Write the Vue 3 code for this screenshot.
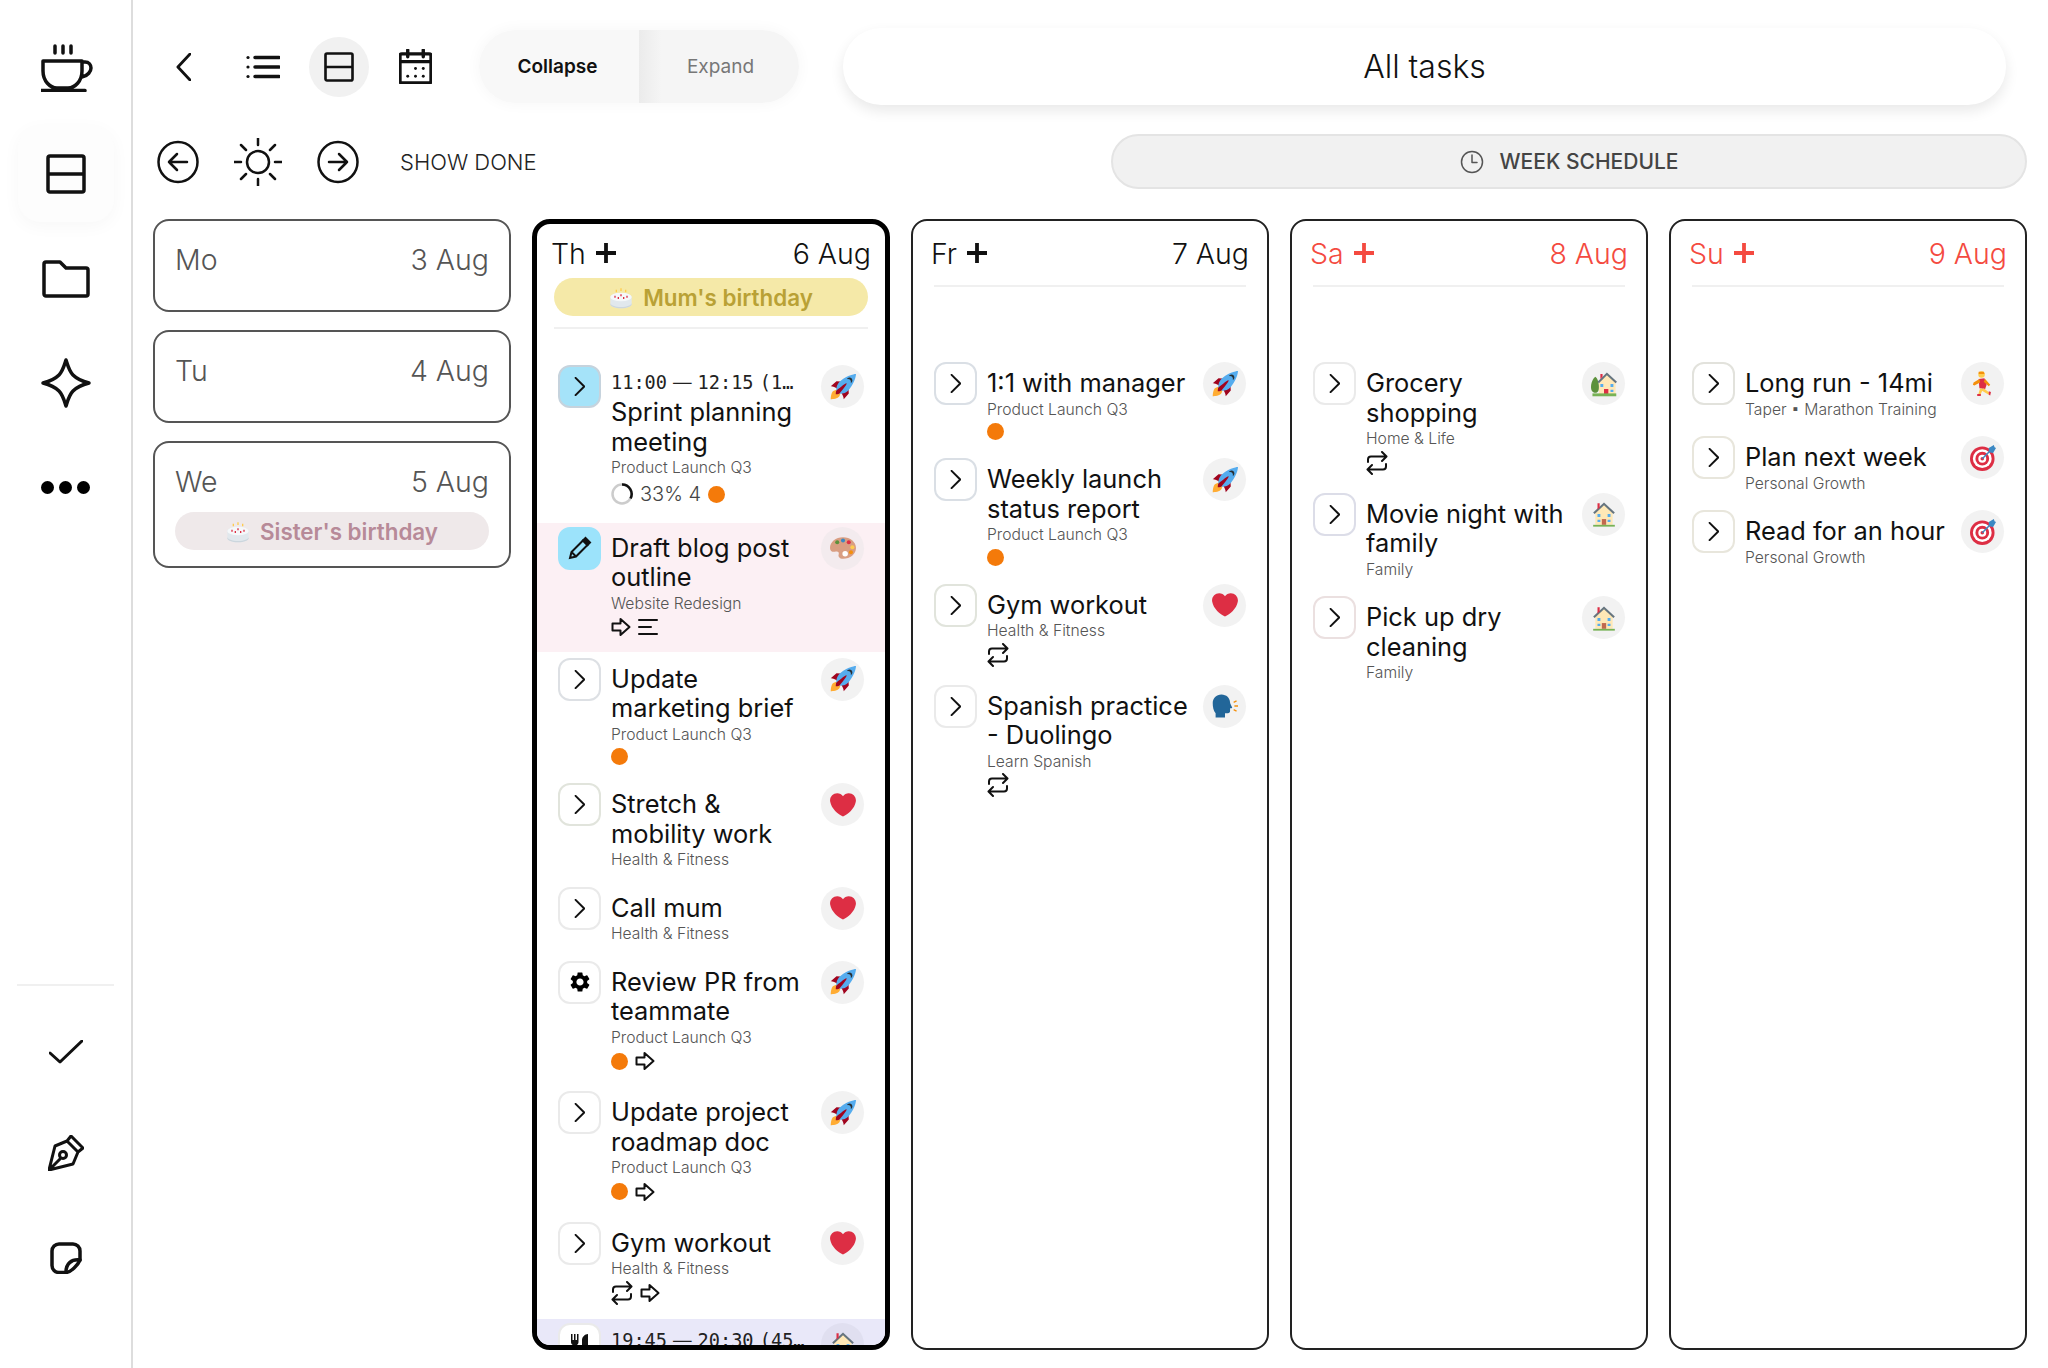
<script setup>
const chevron = { kind: 'chev' }

const days = [
  {
    short: 'Th', date: '6 Aug', active: true, event: "Mum's birthday",
    tasks: [
      { time: ['11:00', '12:15 (1…'], title: 'Sprint planning meeting', sub: 'Product Launch Q3', icon: 'rocket', btn: { kind: 'chev', bg: '#a5e3f9', edge: '#c6d3dd' }, meta: ['ring', 'dot'] },
      { title: 'Draft blog post outline', sub: 'Website Redesign', icon: 'palette', tone: 'pink', btn: { kind: 'pencil', bg: '#9ce3fb', edge: '#9ce3fb' }, meta: ['arrow', 'lines'] },
      { title: 'Update marketing brief', sub: 'Product Launch Q3', icon: 'rocket', btn: { kind: 'chev', edge: '#dde0e4' }, meta: ['dot'] },
      { title: 'Stretch & mobility work', sub: 'Health & Fitness', icon: 'heart', btn: { kind: 'chev', edge: '#e1e4dc' } },
      { title: 'Call mum', sub: 'Health & Fitness', icon: 'heart', btn: chevron },
      { title: 'Review PR from teammate', sub: 'Product Launch Q3', icon: 'rocket', btn: { kind: 'gear' }, meta: ['dot', 'arrow'] },
      { title: 'Update project roadmap doc', sub: 'Product Launch Q3', icon: 'rocket', btn: chevron, meta: ['dot', 'arrow'] },
      { title: 'Gym workout', sub: 'Health & Fitness', icon: 'heart', btn: chevron, meta: ['repeat', 'arrow'] },
      { time: ['19:45', '20:30 (45…'], icon: 'house', tone: 'lilac', btn: { kind: 'fork' } }
    ]
  },
  {
    short: 'Fr', date: '7 Aug',
    tasks: [
      { title: '1:1 with manager', sub: 'Product Launch Q3', icon: 'rocket', btn: { kind: 'chev', edge: '#dadfe5' }, meta: ['dot'] },
      { title: 'Weekly launch status report', sub: 'Product Launch Q3', icon: 'rocket', btn: { kind: 'chev', edge: '#dadfe5' }, meta: ['dot'] },
      { title: 'Gym workout', sub: 'Health & Fitness', icon: 'heart', btn: { kind: 'chev', edge: '#e1e4dc' }, meta: ['repeat'] },
      { title: 'Spanish practice - Duolingo', sub: 'Learn Spanish', icon: 'speak', btn: chevron, meta: ['repeat'] }
    ]
  },
  {
    short: 'Sa', date: '8 Aug', weekend: true,
    tasks: [
      { title: 'Grocery shopping', sub: 'Home & Life', icon: 'homeTree', btn: chevron, meta: ['repeat'] },
      { title: 'Movie night with family', sub: 'Family', icon: 'house', btn: { kind: 'chev', edge: '#dcdde8' } },
      { title: 'Pick up dry cleaning', sub: 'Family', icon: 'house', btn: { kind: 'chev', edge: '#ebe0e0' } }
    ]
  },
  {
    short: 'Su', date: '9 Aug', weekend: true,
    tasks: [
      { title: 'Long run - 14mi', sub: 'Taper ▪ Marathon Training', icon: 'runner', btn: { kind: 'chev', edge: '#e2e2dc' } },
      { title: 'Plan next week', sub: 'Personal Growth', icon: 'target', btn: { kind: 'chev', edge: '#e8e6dc' } },
      { title: 'Read for an hour', sub: 'Personal Growth', icon: 'target', btn: { kind: 'chev', edge: '#e8e6dc' } }
    ]
  }
]

const collapsed = [
  { short: 'Mo', date: '3 Aug' },
  { short: 'Tu', date: '4 Aug' },
  { short: 'We', date: '5 Aug', event: "Sister's birthday" }
]

function btnStyle(btn) {
  return { background: btn.bg || '#fff', borderColor: btn.edge || '#eaeaea' }
}
</script>

<template>
  <div class="app">
    <!-- sprite for every icon used below -->
    <svg class="sprite" width="0" height="0">
      <defs>
        <symbol id="cup" viewBox="0 0 52 48">
          <path d="M14 2v7M22 2v7M30 2v7M2 17h39v10c0 10-7 17-14 17H16C9 44 2 37 2 27zM41 18h3c4 0 6 3 6 6s-3 8-9 9M0 46.500h44" />
        </symbol>
        <symbol id="split" viewBox="0 0 40 40">
          <path d="M4 2h32a2 2 0 0 1 2 2v32a2 2 0 0 1-2 2H4a2 2 0 0 1-2-2V4a2 2 0 0 1 2-2zM2 20h36" />
        </symbol>
        <symbol id="folder" viewBox="0 0 48 38">
          <path d="M4 2h14l6 6h20a2 2 0 0 1 2 2v24a2 2 0 0 1-2 2H4a2 2 0 0 1-2-2V4a2 2 0 0 1 2-2z" />
        </symbol>
        <symbol id="star" viewBox="0 0 52 52">
          <path d="M26 3c1 3 3 11 7 15s12 7 16 8c-4 1-12 4-16 8s-6 12-7 15c-1-3-3-11-7-15S7 27 3 26c4-1 12-4 16-8s6-12 7-15z" />
        </symbol>
        <symbol id="check" viewBox="0 0 34 24">
          <path d="M1 13l10 9L33 1" />
        </symbol>
        <symbol id="nib" viewBox="0 0 36 36">
          <path d="M1 35L7 11l12-5 11 11-5 12zM1 35l11-11M19 6l4-5 12 12-5 4" />
          <circle cx="15" cy="20" r="3.500" />
        </symbol>
        <symbol id="note" viewBox="0 0 32 32">
          <path d="M10 30.500H9a7 7 0 0 1-7-7V9a7 7 0 0 1 7-7h14a7 7 0 0 1 7 7v9c-2 5-9 12-14 12.500z" />
          <path d="M16 30c0-8 5-13 14-12" />
        </symbol>
        <symbol id="back" viewBox="0 0 16 30">
          <path d="M15 1L2 15l13 14" />
        </symbol>
        <symbol id="list" viewBox="0 0 34 24">
          <path d="M9 2.500h24M9 12h24M9 21.500h24" />
          <circle class="solid" cx="2" cy="2.500" r="1.600" />
          <circle class="solid" cx="2" cy="12" r="1.600" />
          <circle class="solid" cx="2" cy="21.500" r="1.600" />
        </symbol>
        <symbol id="calendar" viewBox="0 0 34 36">
          <path d="M3 5h28a2 2 0 0 1 2 2v26a2 2 0 0 1-2 2H3a2 2 0 0 1-2-2V7a2 2 0 0 1 2-2zM1 13h32M9 1v7M25 1v7" />
          <circle class="solid" cx="17" cy="20" r="1.500" />
          <circle class="solid" cx="25" cy="20" r="1.500" />
          <circle class="solid" cx="9" cy="28" r="1.500" />
          <circle class="solid" cx="17" cy="28" r="1.500" />
          <circle class="solid" cx="25" cy="28" r="1.500" />
        </symbol>
        <symbol id="circleLeft" viewBox="0 0 42 44">
          <ellipse cx="21" cy="22" rx="19.500" ry="20" />
          <path d="M30 22H12M20 14l-8 8 8 8" />
        </symbol>
        <symbol id="circleRight" viewBox="0 0 42 44">
          <ellipse cx="21" cy="22" rx="19.500" ry="20" />
          <path d="M12 22h18M22 14l8 8-8 8" />
        </symbol>
        <symbol id="sun" viewBox="0 0 48 48">
          <circle cx="24" cy="24" r="11" />
          <path d="M24 0v7M24 41v7M0 24h7M41 24h7M7 7l5 5M36 36l5 5M7 41l5-5M36 12l5-5" />
        </symbol>
        <symbol id="clock" viewBox="0 0 24 24">
          <circle cx="12" cy="12" r="10.500" />
          <path d="M12 5v7.500h5" />
        </symbol>
        <symbol id="plus" viewBox="0 0 20 20">
          <path d="M10 0v20M0 10h20" />
        </symbol>
        <symbol id="chev" viewBox="0 0 14 24">
          <path d="M2 1l11 11L2 23" />
        </symbol>
        <symbol id="arrow" viewBox="0 0 20 20">
          <path d="M1.500 6.500h8V2l9 8-9 8v-4.500h-8z" />
        </symbol>
        <symbol id="repeat" viewBox="0 0 22 24">
          <path d="M2 11V8.500a3 3 0 0 1 3-3h15M16 1l4.500 4.500L16 10M20 13v2.500a3 3 0 0 1-3 3H2M6 14l-4.500 4.500L6 23" />
        </symbol>
        <symbol id="lines" viewBox="0 0 20 18">
          <path d="M1 2h18M1 9h12M1 16h18" />
        </symbol>
        <symbol id="pencil" viewBox="0 0 24 24">
          <path d="M2 22l1.500-6L15 4.500l4.500 4.500L8 20.500zM3.500 16L8 20.500" fill="none" stroke="#111" stroke-width="2" />
          <path d="M15 4.500L17.500 2 22 6.500 19.500 9z" fill="#111" stroke="#111" stroke-width="2" />
        </symbol>
        <symbol id="gear" viewBox="0 0 24 24">
          <path fill="#000" d="M19.140 12.940c.04-.3.06-.61.06-.94 0-.32-.02-.64-.07-.94l2.030-1.580a.49.49 0 0 0 .12-.61l-1.920-3.320a.488.488 0 0 0-.59-.22l-2.390.96c-.5-.38-1.030-.7-1.620-.94l-.36-2.540a.484.484 0 0 0-.48-.41h-3.840c-.24 0-.43.17-.47.41l-.36 2.540c-.59.24-1.130.57-1.620.94l-2.390-.96c-.22-.08-.47 0-.59.22L2.740 8.870c-.12.21-.08.47.12.61l2.030 1.580c-.05.3-.09.63-.09.94s.02.64.07.94l-2.030 1.580a.49.49 0 0 0-.12.61l1.920 3.320c.12.22.37.29.59.22l2.390-.96c.5.38 1.030.7 1.620.94l.36 2.540c.05.24.24.41.48.41h3.840c.24 0 .44-.17.47-.41l.36-2.540c.59-.24 1.130-.56 1.620-.94l2.390.96c.22.08.47 0 .59-.22l1.920-3.320c.12-.22.07-.47-.12-.61l-2.010-1.580zM12 15.600c-1.980 0-3.600-1.620-3.600-3.600s1.620-3.600 3.600-3.600 3.600 1.620 3.600 3.600-1.620 3.600-3.600 3.600z" />
        </symbol>
        <symbol id="fork" viewBox="0 0 24 24">
          <path fill="#111" d="M3 2h1.500v6H6V2h1.500v6H9V2h1.500v8c0 2-1.200 3-2.500 3.400V22H6v-8.600C4.200 13 3 12 3 10zM20 2v20h-2.500v-7H14V8c0-3 3-6 6-6z" />
        </symbol>

        <symbol id="rocket" viewBox="0 0 36 36">
          <path fill="#A0041E" d="M1 17l8-7 16 1 1 16-7 8s0-6-6-12-12-6-12-6z" />
          <path fill="#FFAC33" d="M1 35s0-8 3-11 11-3 11-3 0 8-3 11-11 3-11 3z" />
          <path fill="#55ACEE" d="M36 0s-10 0-22 10c-6 5-6 14-4 16s11 2 16-4C36 10 36 0 36 0z" />
          <path fill="#292F33" d="M27 5c-1.600 0-3 1-3.600 2.400.5-.2 1-.4 1.600-.4 2.200 0 4 1.800 4 4 0 .6-.1 1.100-.4 1.600C30 12 31 10.600 31 9c0-2.200-1.800-4-4-4z" />
          <path fill="#A0041E" d="M8 28s0-4 1-5 13-11 14-10-9 13-10 14-5 1-5 1z" />
        </symbol>
        <symbol id="heart" viewBox="0 0 36 36">
          <path fill="#DD2E44" d="M35.900 11.800c0-5.450-4.400-9.900-9.900-9.900-3.300 0-6.200 1.600-8 4.100-1.800-2.500-4.700-4.100-8-4.100C4.500 1.900.1 6.300.1 11.800c0 .8.100 1.500.3 2.200C1.800 22.600 11.200 31.600 18 34c6.800-2.400 16.200-11.400 17.600-20 .2-.7.300-1.400.3-2.200z" />
        </symbol>
        <symbol id="palette" viewBox="0 0 36 36">
          <path fill="#D99E82" d="M18 3C8 3 0 9.500 0 18c0 5 4 6 8 5 3-.8 5 1 4 4-1 2.500 1 6 6 6 10 0 18-6.500 18-15S28 3 18 3z" />
          <circle fill="#5C913B" cx="10" cy="10" r="2.800" />
          <circle fill="#3B88C3" cx="18" cy="7.500" r="2.800" />
          <circle fill="#DD2E44" cx="26" cy="10" r="2.800" />
          <circle fill="#FFCC4D" cx="31" cy="17" r="2.800" />
          <circle fill="#F4900C" cx="29" cy="24" r="2.800" />
          <circle fill="#fff" cx="21" cy="26" r="3.800" />
        </symbol>
        <symbol id="house" viewBox="0 0 36 36">
          <path fill="#FFE8B6" d="M6 16L18 5l12 11v17H6z" />
          <path fill="#66757F" d="M18 2L3 16l2 2L18 6l13 12 2-2z" />
          <path fill="#C1694F" d="M15 25h6v8h-6z" />
          <path fill="#55ACEE" d="M9 18h4v4H9zM23 18h4v4h-4zM23 26h4v3h-4zM9 26h4v3H9z" />
          <path fill="#DD2E44" d="M9 3h3v6l-3 3z" />
          <path fill="#77B255" d="M3 33h30v2.500H3z" />
        </symbol>
        <symbol id="homeTree" viewBox="0 0 36 36">
          <path fill="#5C913B" d="M6 8c3 2 5 8 5 14s-2 8-5 8-6-2-6-8S3 10 6 8z" />
          <path fill="#FFE8B6" d="M11 16L22 5l12 11v17H11z" />
          <path fill="#66757F" d="M22 2L9 15l2 2L22 6l12 11 2-2z" />
          <path fill="#DD2E44" d="M18 25h6v8h-6zM13 4h3v4l-3 3z" />
          <path fill="#55ACEE" d="M13 18h4v4h-4zM27 18h4v4h-4zM27 26h4v3h-4z" />
          <path fill="#77B255" d="M2 31h33v4H2z" />
        </symbol>
        <symbol id="target" viewBox="0 0 36 36">
          <circle fill="#DD2E44" cx="17" cy="19" r="17" />
          <circle fill="#fff" cx="17" cy="19" r="13" />
          <circle fill="#DD2E44" cx="17" cy="19" r="9.500" />
          <circle fill="#fff" cx="17" cy="19" r="5.500" />
          <circle fill="#DD2E44" cx="17" cy="19" r="2.500" />
          <path fill="none" stroke="#3B88C3" stroke-width="2" d="M17 19L29 7" />
          <path fill="#3B88C3" d="M26 4l7-4 1 3 2 1-4 7-6-1z" />
        </symbol>
        <symbol id="runner" viewBox="0 0 36 36">
          <circle fill="#FFCC4D" cx="16" cy="5" r="4.500" />
          <path fill="#F4900C" d="M12 1h7l1 3h-8z" />
          <path fill="#DD2E44" d="M12 11l8-1 3 9-2 6-8-1z" />
          <path fill="#F4900C" d="M13 11L5 16l-1 3 2 1 8-4zM21 11l7 8-2 2-7-6z" />
          <path fill="#FFCC4D" d="M14 24l4 1-4 9h-3zM19 24l8 6-1 3-10-6z" />
          <path fill="#DD2E44" d="M10 32h5v2.500h-5zM26 28l3 1-1 5-2-1z" />
        </symbol>
        <symbol id="speak" viewBox="0 0 36 36">
          <path fill="#269" d="M13 2c7 0 12 5 12 11 0 1 2 5 3 7 0 1-2 1-3 1v4c0 2-1 3-3 3h-4v6H5v-6C2 25 1 20 1 14 1 7 6 2 13 2z" />
          <path fill="none" stroke="#F4900C" stroke-width="1.800" d="M30 13l4-2M31 18h5M30 23l4 2" />
        </symbol>
        <symbol id="cake" viewBox="0 0 36 36">
          <path fill="#E1E8ED" d="M2 18c0-3 7-6 16-6s16 3 16 6v11c0 3-7 6-16 6S2 32 2 29z" />
          <ellipse fill="#F5F8FA" cx="18" cy="18" rx="16" ry="6.500" />
          <path fill="#CCD6DD" d="M2 27c0 3 7 6 16 6s16-3 16-6v2c0 3-7 6-16 6S2 32 2 29z" />
          <path fill="#DD2E44" d="M8 16h2v3H8zM13 18h2v3h-2zM21 18h2v3h-2zM26 16h2v3h-2zM17 14h2v3h-2z" />
          <path fill="#FFCC4D" d="M10 7h2v4h-2zM17 5h2v4h-2zM24 7h2v4h-2z" />
        </symbol>
      </defs>
    </svg>

    <aside class="rail">
      <div class="rail-slot cup"><svg class="ic" width="52" height="48"><use href="#cup" /></svg></div>
      <div class="rail-slot current"><svg class="ic" width="40" height="40"><use href="#split" /></svg></div>
      <div class="rail-slot"><svg class="ic" width="48" height="38"><use href="#folder" /></svg></div>
      <div class="rail-slot"><svg class="ic" width="52" height="52"><use href="#star" /></svg></div>
      <div class="rail-slot dots"><i></i><i></i><i></i></div>
      <div class="rail-line"></div>
      <div class="rail-slot"><svg class="ic thin" width="34" height="24"><use href="#check" /></svg></div>
      <div class="rail-slot pen"><svg class="ic thin" width="36" height="36"><use href="#nib" /></svg></div>
      <div class="rail-slot"><svg class="ic" width="32" height="32"><use href="#note" /></svg></div>
    </aside>

    <main class="main">
      <div class="toolbar">
        <div class="tool back"><svg class="ic thin" width="15" height="28"><use href="#back" /></svg></div>
        <div class="tool"><svg class="ic" width="34" height="24"><use href="#list" /></svg></div>
        <div class="tool on"><svg class="ic" width="30" height="30"><use href="#split" /></svg></div>
        <div class="tool"><svg class="ic" width="33" height="35"><use href="#calendar" /></svg></div>
        <div class="segment">
          <div class="seg seg-on">Collapse</div>
          <div class="seg seg-off">Expand</div>
        </div>
        <div class="search">All tasks</div>
      </div>

      <div class="subbar">
        <div class="nav"><svg class="ic thin" width="42" height="44"><use href="#circleLeft" /></svg></div>
        <div class="nav"><svg class="ic thin" width="48" height="48"><use href="#sun" /></svg></div>
        <div class="nav"><svg class="ic thin" width="42" height="44"><use href="#circleRight" /></svg></div>
        <div class="show-done">SHOW DONE</div>
        <div class="schedule">
          <svg class="ic clock" width="24" height="24"><use href="#clock" /></svg>
          <span>WEEK SCHEDULE</span>
        </div>
      </div>

      <div class="week">
        <div class="stack">
          <div v-for="d in collapsed" :key="d.short" class="mini" :class="{ tall: d.event }">
            <div class="mini-head"><span>{{ d.short }}</span><span>{{ d.date }}</span></div>
            <div v-if="d.event" class="pill pill-rose">
              <svg width="24" height="24"><use href="#cake" /></svg>
              <span>{{ d.event }}</span>
            </div>
          </div>
        </div>

        <section v-for="d in days" :key="d.short" class="day" :class="{ active: d.active, weekend: d.weekend }">
          <header class="day-head">
            <div class="day-row">
              <span class="day-name">{{ d.short }}<svg class="ic plus" width="20" height="20"><use href="#plus" /></svg></span>
              <span class="day-date">{{ d.date }}</span>
            </div>
            <div v-if="d.event" class="pill pill-gold">
              <svg width="24" height="24"><use href="#cake" /></svg>
              <span>{{ d.event }}</span>
            </div>
          </header>

          <div class="tasks">
            <article v-for="(t, i) in d.tasks" :key="i" class="task" :class="t.tone">
              <div class="task-btn" :style="btnStyle(t.btn)">
                <svg v-if="t.btn.kind === 'chev'" class="ic fine" width="11" height="19"><use href="#chev" /></svg>
                <svg v-else width="24" height="24"><use :href="'#' + t.btn.kind" /></svg>
              </div>
              <div class="task-body" :class="{ timed: t.time }">
                <div v-if="t.time" class="task-time">
                  <span>{{ t.time[0] }}</span><span class="dash">—</span><span>{{ t.time[1] }}</span>
                </div>
                <div v-if="t.title" class="task-title">{{ t.title }}</div>
                <div v-if="t.sub" class="task-sub">{{ t.sub }}</div>
                <div v-if="t.meta" class="task-meta" :class="{ plain: t.meta.length === 1 && t.meta[0] === 'dot', big: t.meta[0] === 'ring' }">
                  <template v-for="m in t.meta" :key="m">
                    <span v-if="m === 'dot'" class="dot"></span>
                    <template v-else-if="m === 'ring'">
                      <svg class="ring" width="22" height="22" viewBox="0 0 22 22">
                        <circle cx="11" cy="11" r="9.500" fill="none" stroke="#ccc" stroke-width="2.500" />
                        <path d="M11 1.500a9.500 9.500 0 0 1 8.500 14" fill="none" stroke="#111" stroke-width="2.500" />
                      </svg>
                      <span class="pct">33% 4</span>
                    </template>
                    <svg v-else-if="m === 'arrow'" class="ic small" width="20" height="20"><use href="#arrow" /></svg>
                    <svg v-else-if="m === 'repeat'" class="ic small" width="22" height="24"><use href="#repeat" /></svg>
                    <svg v-else class="ic small" width="20" height="18"><use href="#lines" /></svg>
                  </template>
                </div>
              </div>
              <div class="task-icon">
                <svg width="26" height="26"><use :href="'#' + t.icon" /></svg>
              </div>
            </article>
          </div>
        </section>
      </div>
    </main>
  </div>
</template>

<style scoped>
.app {
  display: flex;
  height: 1368px;
  overflow: hidden;
  background: #fff;
  color: #111;
  font-family: Inter, "Liberation Sans", sans-serif;
}

.sprite {
  position: absolute;
}

.ic {
  fill: none;
  stroke: currentColor;
  stroke-width: 3.5;
  stroke-linecap: round;
  stroke-linejoin: round;
  flex: none;
}

.ic.thin {
  stroke-width: 3;
}

.ic .solid,
.solid {
  fill: currentColor;
  stroke: none;
}

.rail {
  width: 131px;
  flex: none;
  box-sizing: content-box;
  border-right: 2px solid #ddd;
  display: flex;
  flex-direction: column;
  align-items: center;
  padding-top: 16px;
}

.rail-slot {
  width: 96px;
  height: 104px;
  display: flex;
  align-items: center;
  justify-content: center;
}

.rail-slot.cup {
  padding-left: 2px;
  box-sizing: border-box;
}

.rail-slot.current {
  height: 96px;
  margin: 6px 0 5px;
  border-radius: 22px;
  background: #fdfdfd;
  box-shadow: 0 4px 18px rgba(0, 0, 0, 0.035);
}

.rail-slot.pen {
  height: 98px;
  margin-bottom: 4px;
}

.dots {
  gap: 5px;
}

.dots i {
  width: 13px;
  height: 13px;
  border-radius: 50%;
  background: #000;
}

.rail-line {
  width: 97px;
  height: 2px;
  margin-top: auto;
  margin-bottom: 14px;
  background: #f0f0f0;
}

.rail-slot:last-child {
  margin-bottom: 58px;
}

.main {
  flex: 1;
  min-width: 0;
  display: flex;
  flex-direction: column;
  padding: 28px 21px 18px 20px;
}

.toolbar {
  display: flex;
  align-items: center;
  height: 77px;
  margin-right: -21px;
  padding-right: 42px;
}

.tool {
  width: 60px;
  height: 60px;
  margin-right: 16px;
  border-radius: 50%;
  display: flex;
  align-items: center;
  justify-content: center;
}

.tool.back {
  margin-right: 20px;
}

.tool.on {
  background: #f1f1f1;
}

.segment {
  display: flex;
  margin-left: 18px;
  height: 73px;
  border-radius: 37px;
  overflow: hidden;
  box-shadow: 0 0 14px 2px #f8f8f8;
}

.seg {
  width: 160px;
  box-sizing: border-box;
  display: flex;
  align-items: center;
  justify-content: center;
  font-size: 19px;
}

.seg-on {
  background: #f8f8f8;
  padding-right: 3px;
  font-weight: 600;
}

.seg-off {
  background: linear-gradient(90deg, #ebebeb, #f5f5f5 14%);
  padding-left: 3px;
  color: #777;
}

.search {
  flex: 1;
  height: 77px;
  margin-left: 44px;
  border-radius: 38px;
  background: #fff;
  box-shadow: 0 6px 14px rgba(0, 0, 0, 0.09);
  display: flex;
  align-items: center;
  justify-content: center;
  font-size: 32px;
  font-weight: 300;
}

.subbar {
  display: flex;
  align-items: center;
  height: 55px;
  margin-top: 29px;
  margin-bottom: 30px;
}

.nav {
  width: 60px;
  height: 48px;
  margin-right: 20px;
  display: flex;
  align-items: center;
  justify-content: center;
}

.nav:first-child {
  margin-left: -5px;
}

.nav .ic {
  stroke-width: 2.5;
}

.show-done {
  margin-left: 12px;
  font-size: 22px;
  font-weight: 300;
  color: #222;
}

.schedule {
  margin-left: auto;
  width: 916px;
  height: 55px;
  box-sizing: border-box;
  border: 2px solid #e4e4e4;
  border-radius: 28px;
  background: #f1f1f1;
  display: flex;
  align-items: center;
  justify-content: center;
  gap: 16px;
  font-size: 21px;
  font-weight: 500;
  color: #444;
}

.clock {
  stroke-width: 1.500;
  color: #555;
}

.week {
  flex: 1;
  min-height: 0;
  display: grid;
  grid-template-columns: repeat(5, 358px);
  column-gap: 21px;
}

.stack {
  display: flex;
  flex-direction: column;
  gap: 18px;
}

.mini {
  height: 93px;
  box-sizing: border-box;
  border: 2px solid #555;
  border-radius: 16px;
  padding: 21px 20px 0;
  color: #555;
}

.mini.tall {
  height: 127px;
}

.mini-head,
.day-row {
  display: flex;
  justify-content: space-between;
  align-items: center;
  height: 34px;
  font-size: 28.500px;
  font-weight: 300;
}

.pill {
  height: 38px;
  border-radius: 19px;
  display: flex;
  align-items: center;
  justify-content: center;
  gap: 10px;
  font-size: 22.400px;
  font-weight: 600;
}

.pill-rose {
  margin-top: 14px;
  background: #efe9ea;
  color: #b78a98;
}

.pill-gold {
  margin: 8px 0 11px;
  background: #f5e9a8;
  color: #b9a135;
}

.day {
  display: flex;
  flex-direction: column;
  min-height: 0;
  overflow: hidden;
  box-sizing: border-box;
  border: 2px solid #222;
  border-radius: 16px;
}

.day.active {
  border: 5px solid #000;
  border-radius: 18px;
}

.day-head {
  margin: 15px 21px 0;
  border-bottom: 2px solid #f0f0f0;
}

.day.active .day-head {
  margin: 12px 17px 0;
}

.day-row {
  margin: 0 -3px 15px;
}

.day.active .day-row {
  margin-bottom: 0;
}

.day-name {
  display: flex;
  align-items: center;
  gap: 10px;
}

.plus {
  stroke-width: 3.800;
  stroke-linecap: butt;
}

.weekend .day-row {
  color: #f44a40;
}

.tasks {
  flex: 1;
  min-height: 0;
  overflow: hidden;
  padding-top: 71px;
}

.day.active .tasks {
  padding-top: 32px;
}

.task {
  display: flex;
  padding: 4px 21px 0;
}

.task.pink {
  background: #fcf0f4;
  margin-bottom: 1.500px;
}

.task.pink .task-body {
  padding-bottom: 11.500px;
}

.task.lilac {
  background: #e9e8f9;
}

.task-btn {
  width: 43px;
  height: 43px;
  flex: none;
  box-sizing: border-box;
  border: 2px solid #eaeaea;
  border-radius: 12px;
  display: flex;
  align-items: center;
  justify-content: center;
}

.ic.fine {
  stroke-width: 2.500;
}

.task-body {
  flex: 1;
  min-width: 0;
  margin: 0 12px 0 10px;
  padding: 6px 0 12.500px;
}

.task-body.timed {
  padding-top: 2px;
}

.task-time {
  height: 30px;
  line-height: 30px;
  font-family: "DejaVu Sans Mono", "Liberation Mono", monospace;
  font-size: 18.600px;
  word-spacing: -5px;
  white-space: nowrap;
  color: #222;
}

.dash {
  margin: 0 6px;
  font-family: Inter, sans-serif;
  font-weight: 300;
}

.task-title {
  font-size: 25.400px;
  line-height: 29.500px;
}

.task-sub {
  height: 21px;
  margin-top: 1px;
  line-height: 21px;
  font-size: 15.700px;
  font-weight: 300;
  color: #555;
  white-space: nowrap;
}

.task-meta {
  display: flex;
  align-items: center;
  gap: 7px;
  height: 27px;
}

.task-meta.plain {
  height: 24px;
  margin-bottom: -2px;
}

.task-meta.big {
  height: 32px;
}

.ic.small {
  stroke-width: 2;
}

.dot {
  width: 17px;
  height: 17px;
  border-radius: 50%;
  background: #f47a0a;
}

.pct {
  font-size: 20px;
  font-weight: 300;
  color: #444;
}

.task-icon {
  width: 43px;
  height: 43px;
  flex: none;
  border-radius: 50%;
  background: #f2f2f2;
  display: flex;
  align-items: center;
  justify-content: center;
}

.task.pink .task-icon {
  background: #f3ebee;
}

.task.lilac .task-icon {
  background: #e0dff0;
}
</style>
